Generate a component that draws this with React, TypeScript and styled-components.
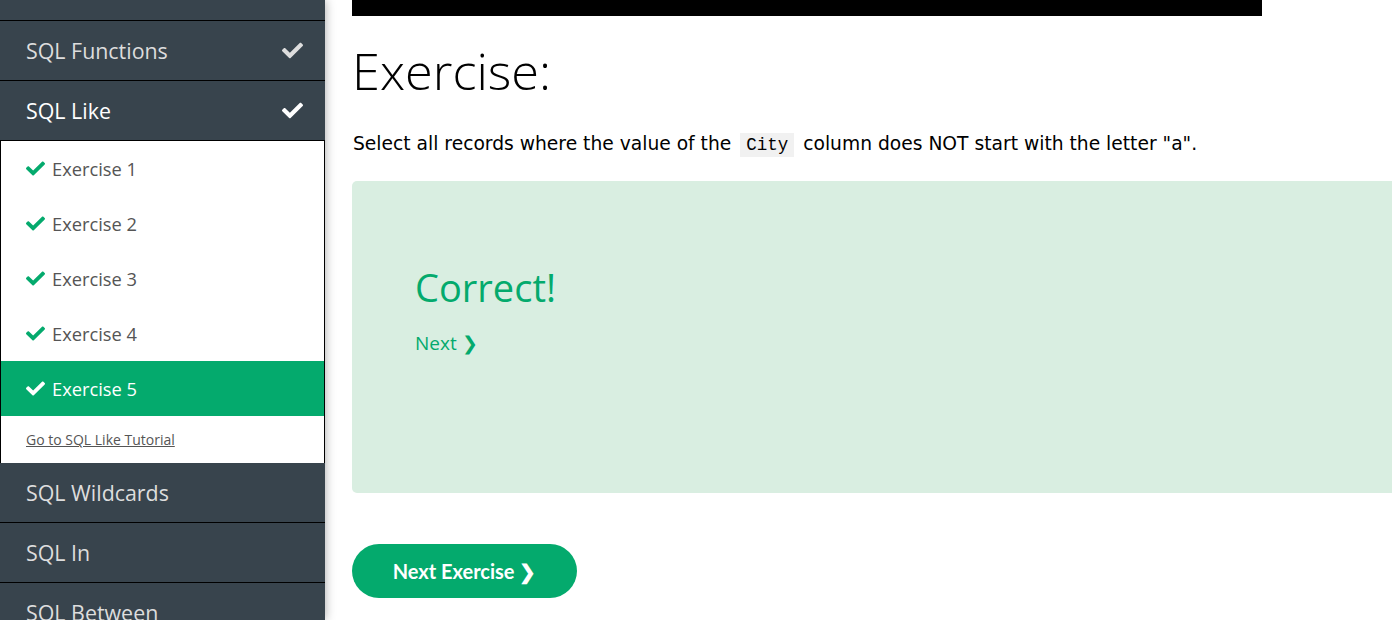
import React from "react";
import styled, { createGlobalStyle } from "styled-components";
import { FaCheck } from "react-icons/fa";

const Global = createGlobalStyle`
  html, body { margin: 0; padding: 0; background: #fff; overflow: hidden; }
  body { font-family: "DejaVu Sans", Verdana, sans-serif; }
`;

const Page = styled.div`
  display: flex;
  width: 1392px;
  height: 620px;
  overflow: hidden;
`;

const Sidebar = styled.nav`
  flex: 0 0 325px;
  height: 620px;
  background: #38444d;
  box-shadow: 0 0 10px rgba(0, 0, 0, 0.35);
  overflow: hidden;
  position: relative;
  z-index: 1;
`;

const List = styled.div`
  display: flex;
  flex-direction: column;
`;

const ScrolledAway = styled.div`
  height: 20px;
  border-bottom: 1px solid #000;
`;

const Topic = styled.div<{ $active?: boolean; $last?: boolean }>`
  height: 59px;
  border-bottom: ${(p) => (p.$last ? "none" : "1px solid #000")};
  display: flex;
  align-items: center;
  justify-content: space-between;
  padding: 0 22px 0 26px;
  font-family: "Open Sans", "Noto Sans", sans-serif;
  font-size: 21.4px;
  color: ${(p) => (p.$active ? "#fff" : "#ddd")};
`;

const TopicCheck = styled(FaCheck)<{ $active?: boolean }>`
  width: 21px;
  height: 21px;
  color: ${(p) => (p.$active ? "#fff" : "#ddd")};
`;

const Panel = styled.div`
  background: #fff;
  border: 1px solid #000;
  border-bottom: none;
  display: flex;
  flex-direction: column;
`;

const ExRow = styled.div<{ $active?: boolean }>`
  height: 55px;
  display: flex;
  align-items: center;
  gap: 7px;
  padding-left: 25px;
  font-family: "Open Sans", "Noto Sans", sans-serif;
  font-size: 18.3px;
  color: ${(p) => (p.$active ? "#fff" : "#555")};
  background: ${(p) => (p.$active ? "#04aa6d" : "transparent")};
`;

const ExCheck = styled(FaCheck)<{ $active?: boolean }>`
  width: 19px;
  height: 19px;
  color: ${(p) => (p.$active ? "#fff" : "#04aa6d")};
`;

const TutLink = styled.a`
  height: 47px;
  display: flex;
  align-items: center;
  padding-left: 25px;
  font-family: "Open Sans", "Noto Sans", sans-serif;
  font-size: 14px;
  color: #555;
  text-decoration: underline;
`;

const Main = styled.main`
  flex: 1;
  padding-left: 27px;
  display: flex;
  flex-direction: column;
  min-width: 0;
`;

const TopBar = styled.div`
  width: 910px;
  height: 16px;
  background: #000;
`;

const Heading = styled.h1`
  margin: 23px 0 0 0;
  font-family: "Open Sans", "Noto Sans", sans-serif;
  font-weight: 300;
  font-size: 50.5px;
  line-height: 64px;
  color: #000;
`;

const Prompt = styled.p`
  margin: 29px 0 0 1px;
  font-family: "DejaVu Sans", Verdana, sans-serif;
  font-size: 18.7px;
  line-height: 24px;
  color: #000;
`;

const Code = styled.code`
  font-family: "Liberation Mono", "DejaVu Sans Mono", monospace;
  font-size: 17.5px;
  background: #f1f1f1;
  padding: 2px 6px;
  margin: 0 3px 0 3px;
`;

const ResultBox = styled.div`
  margin-top: 24px;
  width: 1100px;
  height: 312px;
  background: #d9eee1;
  border-radius: 5px;
  padding: 80px 0 0 63px;
  box-sizing: border-box;
`;

const Correct = styled.div`
  font-family: "Open Sans", "Noto Sans", sans-serif;
  font-size: 38px;
  line-height: 52px;
  color: #04aa6d;
`;

const NextLink = styled.a`
  display: inline-block;
  margin-top: 17px;
  font-family: "Open Sans", "Noto Sans", sans-serif;
  font-size: 19px;
  color: #04aa6d;
  text-decoration: none;
`;

const NextButton = styled.button`
  margin-top: 51px;
  width: 225px;
  height: 54px;
  border: none;
  border-radius: 27px;
  background: #04aa6d;
  color: #fff;
  font-family: "Lato", "Open Sans", sans-serif;
  font-weight: 700;
  font-size: 20px;
  cursor: pointer;
`;

const topicsBottom = ["SQL Wildcards", "SQL In", "SQL Between"];

export default function App() {
  return (
    <>
      <Global />
      <Page>
        <Sidebar>
          <List>
            <ScrolledAway />
            <Topic>
              <span>SQL Functions</span>
              <TopicCheck />
            </Topic>
            <Topic $active $last>
              <span>SQL Like</span>
              <TopicCheck $active />
            </Topic>
            <Panel>
              {[1, 2, 3, 4, 5].map((n) => (
                <ExRow key={n} $active={n === 5}>
                  <ExCheck $active={n === 5} />
                  <span>Exercise {n}</span>
                </ExRow>
              ))}
              <TutLink href="#">Go to SQL Like Tutorial</TutLink>
            </Panel>
            {topicsBottom.map((t) => (
              <Topic key={t}>
                <span>{t}</span>
              </Topic>
            ))}
          </List>
        </Sidebar>
        <Main>
          <TopBar />
          <Heading>Exercise:</Heading>
          <Prompt>
            Select all records where the value of the <Code>City</Code> column does NOT start with the letter "a".
          </Prompt>
          <ResultBox>
            <Correct>Correct!</Correct>
            <NextLink href="#">Next ❯</NextLink>
          </ResultBox>
          <div>
            <NextButton>Next Exercise ❯</NextButton>
          </div>
        </Main>
      </Page>
    </>
  );
}
